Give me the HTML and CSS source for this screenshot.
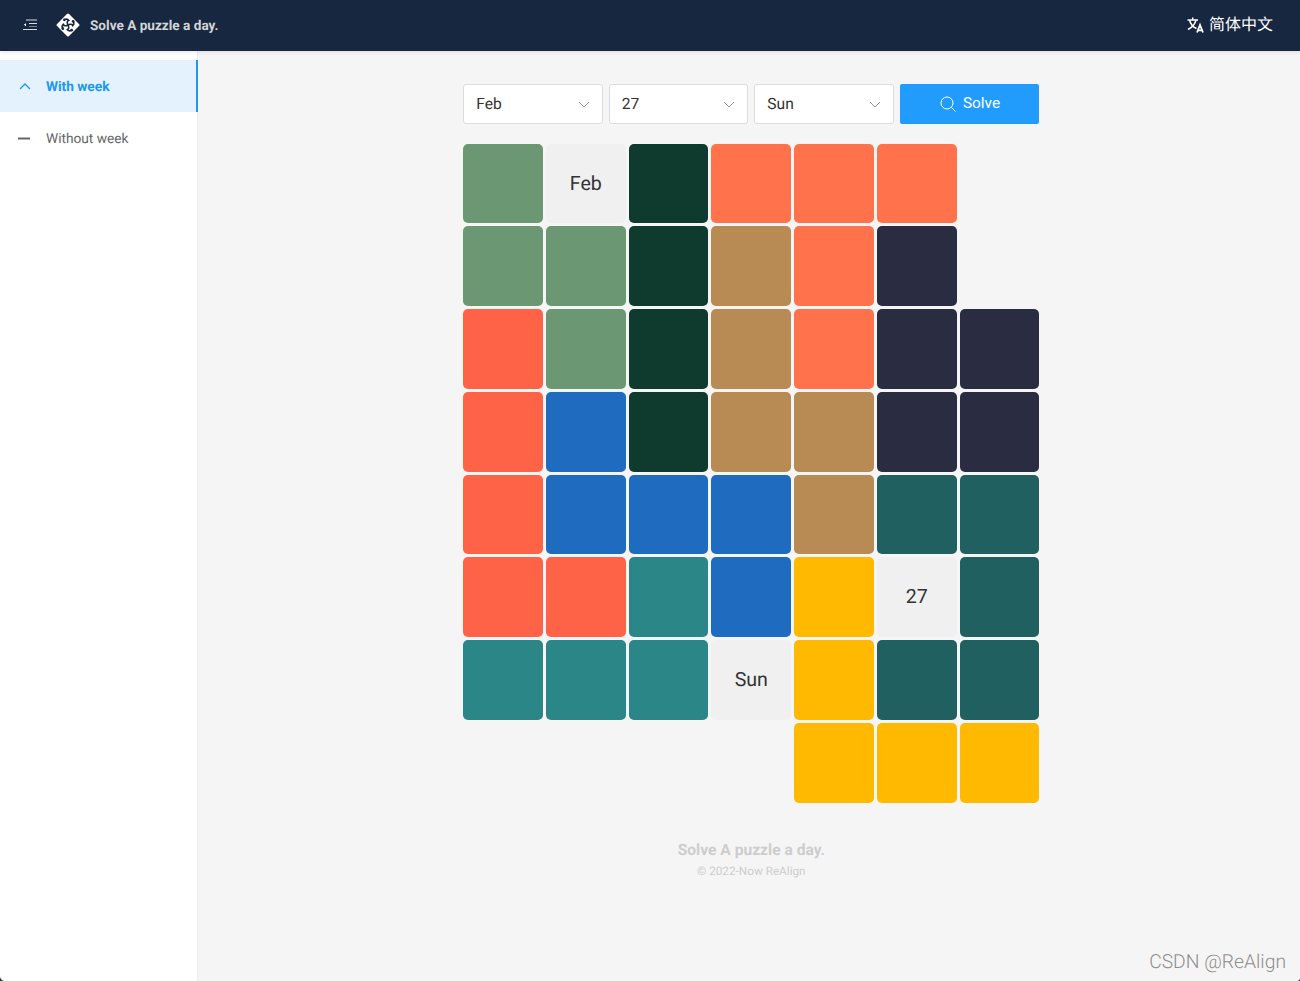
FILE: index.html
```html
<!DOCTYPE html>
<html lang="en">
<head>
<meta charset="utf-8">
<title>Solve A puzzle a day.</title>
<link rel="stylesheet" href="styles.css">
</head>
<body>
<header class="topbar">
  <div class="brand">
    <svg class="menu-icon" viewBox="0 0 14 12" width="14" height="12">
      <path class="menu-a" d="M3 1h11M6 4.500h8"/>
      <path class="menu-b" d="M6 7.500h8"/>
      <path class="menu-a" d="M0 10.500h14"/>
      <path class="menu-fill" d="M3 4.300v3L0.800 5.800z"/>
    </svg>
    <svg class="logo" viewBox="0 0 24 24" width="24" height="24">
      <rect class="logo-bg" x="3.500" y="3.500" width="17" height="17" rx="1.500" transform="rotate(45 12 12)"/>
      <g transform="translate(12 12) scale(1.350) translate(-12 -12)">
        <path class="logo-cut" d="M12 12C11 10 11.500 9 12.500 8.500C11.500 7.500 10.500 7.500 9.500 8"/>
        <path class="logo-cut" d="M12 12C14 11 15 11.500 15.500 12.500C16.500 11.500 16.500 10.500 16 9.500"/>
        <path class="logo-cut" d="M12 12C13 14 12.500 15 11.500 15.500C12.500 16.500 13.500 16.500 14.500 16"/>
        <path class="logo-cut" d="M12 12C10 13 9 12.500 8.500 11.500C7.500 12.500 7.500 13.500 8 14.500"/>
        <circle class="logo-dot" cx="9.300" cy="8.200" r="1"/>
        <circle class="logo-dot" cx="15.800" cy="9.300" r="1"/>
        <circle class="logo-dot" cx="14.700" cy="15.800" r="1"/>
        <circle class="logo-dot" cx="8.200" cy="14.700" r="1"/>
      </g>
    </svg>
    <span class="brand-name">Solve A puzzle a day.</span>
  </div>
  <div class="lang">
    <svg class="lang-icon" viewBox="0 0 18 16" width="18" height="16">
      <path class="lang-stroke" d="M0.500 3h10.500M5.700 0.500V3M9 3C8 7 5 10.500 1 12.500M2.500 3C3.500 7 6 10 9.500 11.500"/>
      <path class="lang-bold" d="M10 15.500L13 8l3 7.500M11 13.300h4"/>
    </svg>
    <span class="lang-name">简体中文</span>
  </div>
</header>

<div class="shell">
  <aside class="sidebar">
    <a class="nav-item active">
      <svg class="nav-icon" viewBox="0 0 12 7" width="12" height="7"><path d="M1 6l5-5 5 5"/></svg>
      <span>With week</span>
    </a>
    <a class="nav-item">
      <svg class="nav-icon" viewBox="0 0 12 7" width="12" height="7"><path class="dash" d="M0 3.500h12"/></svg>
      <span>Without week</span>
    </a>
  </aside>

  <main class="content">
    <div class="panel">
      <div class="controls">
        <div class="select"><span>Feb</span><svg class="chev" viewBox="0 0 12 7" width="12" height="7"><path d="M1 1l5 5 5-5"/></svg></div>
        <div class="select"><span>27</span><svg class="chev" viewBox="0 0 12 7" width="12" height="7"><path d="M1 1l5 5 5-5"/></svg></div>
        <div class="select"><span>Sun</span><svg class="chev" viewBox="0 0 12 7" width="12" height="7"><path d="M1 1l5 5 5-5"/></svg></div>
        <button class="solve" type="button">
          <svg class="search" viewBox="0 0 16 16" width="16" height="16"><circle cx="7" cy="7" r="6"/><path d="M11.500 11.500l4 4"/></svg>
          <span>Solve</span>
        </button>
      </div>

      <div class="board">
        <div class="cell sage"></div><div class="cell label">Feb</div><div class="cell forest"></div><div class="cell coral"></div><div class="cell coral"></div><div class="cell coral"></div><div class="cell"></div>
        <div class="cell sage"></div><div class="cell sage"></div><div class="cell forest"></div><div class="cell tan"></div><div class="cell coral"></div><div class="cell navy"></div><div class="cell"></div>
        <div class="cell tomato"></div><div class="cell sage"></div><div class="cell forest"></div><div class="cell tan"></div><div class="cell coral"></div><div class="cell navy"></div><div class="cell navy"></div>
        <div class="cell tomato"></div><div class="cell blue"></div><div class="cell forest"></div><div class="cell tan"></div><div class="cell tan"></div><div class="cell navy"></div><div class="cell navy"></div>
        <div class="cell tomato"></div><div class="cell blue"></div><div class="cell blue"></div><div class="cell blue"></div><div class="cell tan"></div><div class="cell pine"></div><div class="cell pine"></div>
        <div class="cell tomato"></div><div class="cell tomato"></div><div class="cell teal"></div><div class="cell blue"></div><div class="cell amber"></div><div class="cell label">27</div><div class="cell pine"></div>
        <div class="cell teal"></div><div class="cell teal"></div><div class="cell teal"></div><div class="cell label">Sun</div><div class="cell amber"></div><div class="cell pine"></div><div class="cell pine"></div>
        <div class="cell"></div><div class="cell"></div><div class="cell"></div><div class="cell"></div><div class="cell amber"></div><div class="cell amber"></div><div class="cell amber"></div>
      </div>

      <footer class="foot">
        <div class="foot-title">Solve A puzzle a day.</div>
        <div class="foot-copy">© 2022-Now ReAlign</div>
      </footer>
    </div>
  </main>
</div>
<div class="watermark">CSDN @ReAlign</div>
<div class="corner corner-left"></div>
<div class="corner corner-right"></div>
</body>
</html>
```

FILE: styles.css
```css
* { box-sizing: border-box; }

html, body {
  margin: 0;
  height: 100%;
}

body {
  position: relative;
  display: flex;
  flex-direction: column;
  height: 981px;
  overflow: hidden;
  background: #f5f5f5;
  font-family: Roboto, "Noto Sans CJK SC", sans-serif;
  text-rendering: geometricPrecision;
  color: #333;
}

.topbar {
  position: relative;
  z-index: 2;
  flex: 0 0 51px;
  display: flex;
  align-items: center;
  justify-content: space-between;
  padding: 0 27px 1px 23px;
  background: #172740;
  box-shadow: 0 1px 4px rgba(0, 21, 41, 0.12);
}

.brand {
  display: flex;
  align-items: center;
}

.menu-icon {
  display: block;
  margin-right: 19px;
}

.menu-a { stroke: #d8dbe0; stroke-width: 1; fill: none; }
.menu-b { stroke: #77818f; stroke-width: 1; fill: none; }
.menu-fill { fill: #fff; }

.logo {
  display: block;
  margin-right: 10px;
}

.logo-bg { fill: #fff; }
.logo-cut { stroke: #172740; stroke-width: 1.200; fill: none; }
.logo-dot { fill: #172740; }

.brand-name {
  padding-top: 2px;
  font-size: 13.600px;
  font-weight: 700;
  color: #d2d4d8;
}

.lang {
  display: flex;
  align-items: center;
  gap: 4px;
  color: #fff;
}

.lang-icon { display: block; }
.lang-stroke { stroke: #fff; stroke-width: 1.500; fill: none; }
.lang-bold { stroke: #fff; stroke-width: 1.800; fill: none; }

.lang-name {
  font-size: 16px;
  line-height: 20px;
}

.shell {
  flex: 1;
  display: flex;
  min-height: 0;
}

.sidebar {
  flex: 0 0 198px;
  padding-top: 9px;
  background: #fff;
  border-right: 1px solid #ececec;
}

.nav-item {
  display: flex;
  align-items: center;
  height: 52px;
  padding: 1px 0 0 19px;
  gap: 15px;
  font-size: 13.700px;
  color: #666;
}

.nav-item.active {
  margin-right: -1px;
  background: #e3f2fd;
  border-right: 2px solid #2196f3;
  font-weight: 700;
  color: #2196f3;
}

.nav-icon {
  display: block;
  fill: none;
  stroke: currentColor;
  stroke-width: 1.300;
}

.nav-item:not(.active) .nav-icon {
  margin-left: -1px;
  margin-right: 1px;
}

.nav-icon .dash {
  stroke: #666;
  stroke-width: 2;
}

.content {
  flex: 1;
  display: flex;
  justify-content: center;
  padding: 33px 0 0 4.600px;
}

.panel { width: 576px; }

.controls {
  display: grid;
  grid-template-columns: repeat(4, 1fr);
  gap: 6px;
  height: 40px;
}

.select {
  display: flex;
  align-items: center;
  justify-content: space-between;
  padding: 0 12px 0 12px;
  background: #fff;
  border: 1px solid #dcdcdc;
  border-radius: 3px;
  font-size: 15.600px;
  color: #333;
}

.chev {
  display: block;
  fill: none;
  stroke: #999;
  stroke-width: 1;
}

.solve {
  display: flex;
  align-items: center;
  justify-content: center;
  gap: 7px;
  padding: 0 0 3px 1px;
  background: #219cfc;
  border: 0;
  border-radius: 2px;
  font-family: inherit;
  font-size: 15.400px;
  color: #fff;
}

.search {
  display: block;
  fill: none;
  stroke: #fff;
  stroke-width: 1;
  margin-top: 3px;
}

.board {
  display: grid;
  grid-template-columns: repeat(7, 1fr);
  grid-auto-rows: 79.750px;
  gap: 3px;
  margin-top: 19.700px;
}

.cell {
  display: flex;
  align-items: center;
  justify-content: center;
  padding-bottom: 1px;
  border-radius: 5px;
  font-size: 19.600px;
}

.label { background: #f0f0f0; color: #333; }
.sage { background: #6c9773; }
.forest { background: #0f3b2e; }
.coral { background: #ff724c; }
.tomato { background: #ff6347; }
.tan { background: #b98b54; }
.navy { background: #2a2c41; }
.blue { background: #1f6bc0; }
.pine { background: #216061; }
.teal { background: #2a8687; }
.amber { background: #ffb900; }

.foot {
  margin-top: 36.300px;
  text-align: center;
}

.foot-title {
  font-size: 15.600px;
  font-weight: 700;
  line-height: 22px;
  color: #cdcdcd;
}

.foot-copy {
  font-size: 11.750px;
  line-height: 20px;
  color: #cdcdcd;
}

.watermark {
  position: absolute;
  right: 14px;
  bottom: 8px;
  font-family: Roboto, sans-serif;
  font-size: 19.300px;
  font-weight: 300;
  color: #8e8e8e;
}

.corner {
  position: absolute;
  bottom: 0;
}

.corner-left {
  left: 0;
  width: 5px;
  height: 5px;
  background: radial-gradient(circle at top right, transparent 4.500px, #333 5.500px);
}

.corner-right {
  right: 0;
  width: 3px;
  height: 3px;
  background: radial-gradient(circle at top left, transparent 2.500px, #333 3.500px);
}
```
